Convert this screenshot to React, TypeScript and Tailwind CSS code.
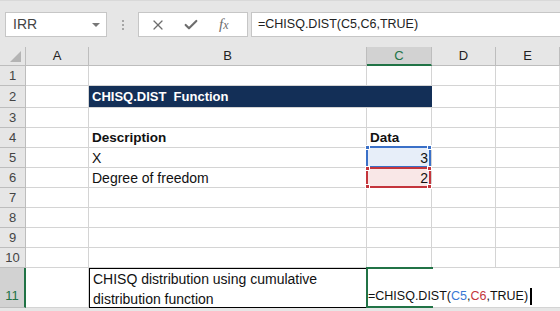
import { X, Check } from "lucide-react";

const cols = ["A", "B", "C", "D", "E"];
const rows = [20, 22, 20, 20, 20, 20, 20, 20, 20, 20];

function Cell({ children, className = "" }: { children?: React.ReactNode; className?: string }) {
  return (
    <div className={`border-r border-b border-[#d4d4d4] bg-white flex items-end px-[3px] leading-[18px] whitespace-nowrap ${className}`}>
      {children}
    </div>
  );
}

export default function App() {
  const body: React.ReactNode[] = [];
  rows.forEach((h, i) => {
    const r = i + 1;
    body.push(
      <div
        key={`h${r}`}
        className="bg-[#e6e6e6] border-r border-b border-[#bdbdbd] text-[#444] flex items-center justify-center text-[13px]"
      >
        {r}
      </div>
    );
    if (r === 2) {
      body.push(<Cell key="a2" />);
      body.push(
        <div key="b2" className="col-span-2 bg-[#132f57] text-white font-bold flex items-center px-[3px] text-[13px] border-b border-[#d4d4d4]">
          CHISQ.DIST&nbsp; Function
        </div>
      );
      body.push(<Cell key="d2" />);
      body.push(<Cell key="e2" />);
      return;
    }
    let b: React.ReactNode = null;
    let c: React.ReactNode = null;
    let cClass = "";
    if (r === 4) {
      b = <span className="font-bold text-[13.5px]">Description</span>;
      c = <span className="font-bold text-[13.5px]">Data</span>;
    }
    if (r === 5) {
      b = "X";
      c = "3";
      cClass = "justify-end relative !bg-[#e7eef9]";
    }
    if (r === 6) {
      b = "Degree of freedom";
      c = "2";
      cClass = "justify-end relative !bg-[#f9e7e7]";
    }
    body.push(<Cell key={`a${r}`} />);
    body.push(<Cell key={`b${r}`}>{b}</Cell>);
    body.push(
      <Cell key={`c${r}`} className={cClass}>
        {c}
        {r === 5 && (
          <div className="absolute -left-px -top-[2px] -right-0 -bottom-px border-2 border-[#3a70c8]">
            <span className="absolute -left-[3px] -top-[3px] w-[5px] h-[5px] bg-[#3a70c8] border border-white" />
            <span className="absolute -right-[3px] -top-[3px] w-[5px] h-[5px] bg-[#3a70c8] border border-white" />
          </div>
        )}
        {r === 6 && (
          <div className="absolute -left-px -top-px -right-0 -bottom-px border-2 border-[#c4353c]">
            <span className="absolute -left-[3px] -top-[3px] w-[5px] h-[5px] bg-[#c4353c] border border-white" />
            <span className="absolute -right-[3px] -top-[3px] w-[5px] h-[5px] bg-[#c4353c] border border-white" />
            <span className="absolute -left-[3px] -bottom-[3px] w-[5px] h-[5px] bg-[#c4353c] border border-white" />
            <span className="absolute -right-[3px] -bottom-[3px] w-[5px] h-[5px] bg-[#c4353c] border border-white" />
          </div>
        )}
      </Cell>
    );
    body.push(<Cell key={`d${r}`} />);
    body.push(<Cell key={`e${r}`} />);
  });

  return (
    <div className="w-[560px] h-[311px] overflow-hidden bg-[#e6e6e6] text-[#111] font-['Liberation_Sans',Arial,sans-serif] text-[14px]">
      {/* formula bar */}
      <div className="h-[47px] flex items-center pt-[1px] border-t border-[#d9d9d9]">
        <div className="ml-[5px] w-[102px] h-[25px] bg-white border border-[#c6c6c6] flex items-center justify-between pl-[7px] pr-[6px] text-[#444] text-[14px]">
          <span>IRR</span>
          <span className="w-0 h-0 border-l-[4px] border-r-[4px] border-t-[4px] border-l-transparent border-r-transparent border-t-[#777]" />
        </div>
        <div className="w-[31px] flex flex-col items-center gap-[2px]">
          <span className="w-[2px] h-[2px] bg-[#a6a6a6]" />
          <span className="w-[2px] h-[2px] bg-[#a6a6a6]" />
          <span className="w-[2px] h-[2px] bg-[#a6a6a6]" />
        </div>
        <div className="w-[110px] h-[25px] bg-white border border-[#c6c6c6] flex items-center text-[#6d6d6d]">
          <X className="ml-[11px] w-[16px] h-[16px]" strokeWidth={1.8} />
          <Check className="ml-[17px] w-[16px] h-[16px]" strokeWidth={3.2} />
          <span className="ml-[20px] font-['Liberation_Serif',serif] italic text-[15px]">
            f<span className="text-[12px]">x</span>
          </span>
        </div>
        <div className="ml-[3px] flex-1 h-[25px] bg-white border border-[#c6c6c6] border-r-0 flex items-center pl-[6px] text-[12.5px] text-[#222]">
          =CHISQ.DIST(C5,C6,TRUE)
        </div>
      </div>

      {/* sheet */}
      <div className="grid grid-cols-[26px_63px_278px_65px_64px_1fr] grid-rows-[19px_20px_22px_20px_20px_20px_20px_20px_20px_20px_20px_40px]">
        <div className="bg-[#e6e6e6] border-r border-b border-[#bdbdbd] relative">
          <div className="absolute right-[4px] bottom-[3px] w-0 h-0 border-l-[11px] border-t-[11px] border-l-transparent border-t-transparent border-b-0 border-r-[11px] border-r-[#b4b4b4] [border-bottom-width:0]" />
        </div>
        {cols.map((c) =>
          c === "C" ? (
            <div key={c} className="bg-[#d2d2d2] border-r border-[#bdbdbd] border-b-2 border-b-[#217346] text-[#217346] flex items-center justify-center text-[13px]">
              {c}
            </div>
          ) : (
            <div key={c} className="bg-[#e6e6e6] border-r border-b border-[#bdbdbd] text-[#222] flex items-center justify-center text-[13px]">
              {c}
            </div>
          )
        )}
        {body}
        <div className="bg-[#d2d2d2] border-r-2 border-r-[#217346] border-b border-[#bdbdbd] text-[#217346] text-[13px] flex items-end justify-center pb-[2px]">
          11
        </div>
        <Cell />
        <div className="bg-white border-t border-b border-l border-black px-[3px] leading-[20px] whitespace-normal">
          CHISQ distribution using cumulative distribution function
        </div>
        <div className="col-span-3 bg-white border-b border-[#d4d4d4] relative flex items-end">
          <div className="absolute left-[-1px] top-[-1px] w-[67px] bottom-[-1px] border-2 border-r-0 border-[#217346]" />
          <div className="relative pl-[1px] pb-[2px] leading-[18px] whitespace-nowrap flex items-end text-[12.5px]">
            <span>=CHISQ.DIST(</span>
            <span className="text-[#3a78d4]">C5</span>
            <span>,</span>
            <span className="text-[#c4353c]">C6</span>
            <span>,TRUE)</span>
            <span className="ml-[2px] w-[2px] h-[17px] bg-black" />
          </div>
        </div>
      </div>
    </div>
  );
}
